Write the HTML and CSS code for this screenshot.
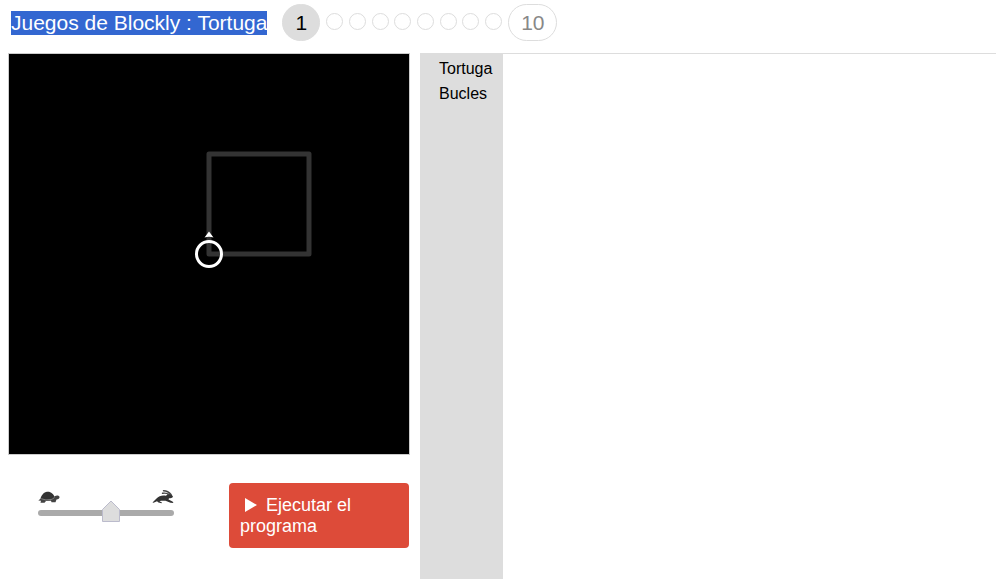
FILE: index.html
```html
<!DOCTYPE html>
<html lang="es">
<head>
<meta charset="utf-8">
<title>Juegos de Blockly : Tortuga</title>
<link rel="stylesheet" href="styles.css">
</head>
<body>
<header class="header">
  <h1 class="title"><span class="selected">Juegos de Blockly : Tortuga</span></h1>
  <nav class="levels" aria-label="Niveles">
    <a class="level current" href="#1">1</a>
    <div class="dots">
      <a class="dot" href="#2" aria-label="2"></a>
      <a class="dot" href="#3" aria-label="3"></a>
      <a class="dot" href="#4" aria-label="4"></a>
      <a class="dot" href="#5" aria-label="5"></a>
      <a class="dot" href="#6" aria-label="6"></a>
      <a class="dot" href="#7" aria-label="7"></a>
      <a class="dot" href="#8" aria-label="8"></a>
      <a class="dot" href="#9" aria-label="9"></a>
    </div>
    <a class="level last" href="#10">10</a>
  </nav>
</header>
<main class="main">
  <section class="stage">
    <svg class="display" viewBox="0 0 400 400" aria-hidden="true">
      <rect width="400" height="400" fill="#000"/>
      <rect x="200" y="100" width="100" height="100" fill="none" stroke="#333" stroke-width="5" stroke-linejoin="round"/>
      <circle cx="200" cy="200" r="12.5" fill="none" stroke="#fff" stroke-width="3"/>
      <path d="M200 177.500L204.500 183.500Q200 182 195.500 183.500Z" fill="#fff"/>
    </svg>
    <div class="controls">
      <div class="speed">
        <div class="animals">
          <svg width="22" height="14" viewBox="0 0 22 14" aria-hidden="true">
            <path d="M2.500 8.500C3.500 5 6 2 9 1.700C13 1.300 15.500 4 17 7.500L15 10L3.500 10Z" fill="#333"/>
            <path d="M15.500 7.500C17 5 20.500 4.800 21.500 6.800C22 8.500 20 9.300 18.500 9.500L17.500 12.300L13.500 12.300L13 10.800L8 11L6.500 12.800L2.500 12.800L3 10.800L.3 10.500L2.500 8.700L14.500 9.500Z" fill="#444"/>
            <path d="M3.200 8.700L8 10L14 9.300L16.500 7.500" fill="none" stroke="#999" stroke-width=".7"/>
          </svg>
          <svg width="22" height="14" viewBox="0 0 22 14" aria-hidden="true">
            <path d="M.5 12.500L4.500 8.500C7 5.500 11 5 14 5.800L15.500 4.200C17.500 3 20 4.300 21 6.800C20.500 8.300 18.500 8.300 17 8.300L16.500 9.600L20.500 11.500L21.500 13L18.500 12.800L13.500 10.800L9 10.800L7.500 11.300L10 12.500L9.500 13.200L6.500 12.500L5 11.200L1.500 12.800Z" fill="#333"/>
            <path d="M17 4.500C15 3 13 2.800 10.500 3.300M19 4.500C17 2 15 .8 11.500.7" fill="none" stroke="#444" stroke-width="1.400" stroke-linecap="round"/>
          </svg>
        </div>
        <input class="slider" type="range" min="0" max="100" value="54" aria-label="Velocidad">
      </div>
      <button class="run" type="button"><svg class="play" width="21" height="16" viewBox="0 0 21 16" aria-hidden="true"><path d="M5 1L17 8L5 15Z" fill="#fff"/></svg> Ejecutar el programa</button>
    </div>
  </section>
  <section class="editor">
    <ul class="toolbox">
      <li>Tortuga</li>
      <li>Bucles</li>
    </ul>
    <div class="workspace"></div>
  </section>
</main>
</body>
</html>
```
FILE: styles.css
```css
* {
  box-sizing: border-box;
}

body {
  margin: 0;
  min-height: 100vh;
  display: flex;
  flex-direction: column;
  background: #fff;
  color: #000;
  font-family: "Liberation Sans", Arial, sans-serif;
}

a {
  color: inherit;
  text-decoration: none;
}

.header {
  display: flex;
  align-items: center;
  gap: 15px;
  padding: 4px 11px 12px;
}

.title {
  margin: 0;
  font-size: 21px;
  line-height: 24px;
  font-weight: normal;
}

.selected {
  display: block;
  background: #3367d1;
  color: #fff;
}

.levels {
  display: flex;
  align-items: center;
  gap: 6px;
  font-size: 21px;
}

.level {
  padding: 0 12px;
  border: 1px solid #ddd;
  border-radius: 19px;
  line-height: 35px;
  color: #888;
}

.current {
  background: #ddd;
  color: #000;
}

.dots {
  display: flex;
  justify-content: space-between;
  width: 176px;
  padding-bottom: 2px;
}

.dot {
  width: 17px;
  height: 17px;
  border: 1px solid #ddd;
  border-radius: 50%;
}

.main {
  flex: 1;
  display: flex;
  gap: 10px;
  padding-left: 8px;
}

.stage {
  flex: 0 0 402px;
}

.display {
  display: block;
  width: 100%;
  border: 1px solid #ccc;
}

.controls {
  display: flex;
  justify-content: space-between;
  padding: 28px 1px 0 30px;
}

.speed {
  width: 136px;
  padding-top: 7px;
}

.animals {
  display: flex;
  justify-content: space-between;
}

.slider {
  appearance: none;
  display: block;
  width: 100%;
  height: 22px;
  margin: -2px 0 0;
  background: none;
}

.slider::-webkit-slider-runnable-track {
  height: 6px;
  border-radius: 3px;
  background: #aaa;
}

.slider::-webkit-slider-thumb {
  appearance: none;
  width: 18px;
  height: 22px;
  margin-top: -10px;
  background: url("data:image/svg+xml,%3Csvg xmlns='http://www.w3.org/2000/svg' width='18' height='22'%3E%3Cpath d='M.5 21.500V9.500L9 1L17.500 9.500V21.500Z' fill='%23ddd' stroke='%23bbc'/%3E%3C/svg%3E");
}

.run {
  width: 180px;
  padding: 12px 11px 11px;
  border: 0;
  border-radius: 4px;
  background: #dd4b39;
  color: #fff;
  font: 18px/21px "Liberation Sans", Arial, sans-serif;
  text-align: left;
}

.play {
  vertical-align: -2px;
}

.editor {
  flex: 1;
  display: flex;
}

.toolbox {
  flex: 0 0 83px;
  margin: 0;
  padding: 3px 0 0 19px;
  background: #ddd;
  list-style: none;
  font-size: 16px;
  line-height: 25px;
}

.workspace {
  flex: 1;
  border-top: 1px solid #ddd;
}
```
